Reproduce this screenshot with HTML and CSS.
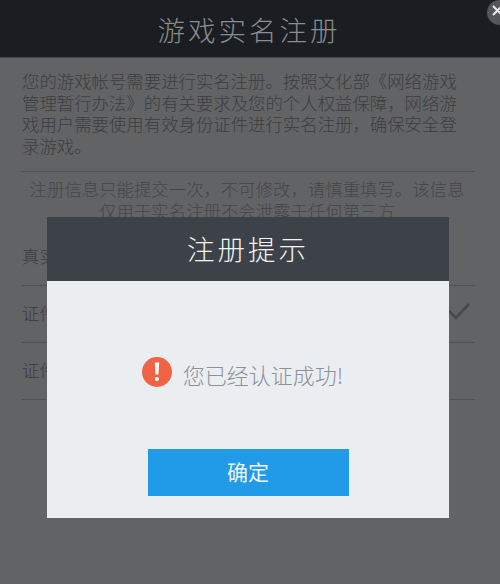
FILE: index.html
```html
<!DOCTYPE html>
<html lang="zh-CN">
<head>
<meta charset="utf-8">
<title>游戏实名注册</title>
<link rel="stylesheet" href="styles.css">
</head>
<body>
<div class="page">
  <header class="topbar">
    <h1 class="topbar-title">游戏实名注册</h1>
    <span class="close-btn"><svg viewBox="0 0 24 24" width="24" height="24"><path d="M6 6l9 9M15 6l-9 9" fill="none" stroke="#e8e8e8" stroke-width="2"/></svg></span>
  </header>
  <main class="content">
    <p class="intro">您的游戏帐号需要进行实名注册。按照文化部《网络游戏管理暂行办法》的有关要求及您的个人权益保障，网络游戏用户需要使用有效身份证件进行实名注册，确保安全登录游戏。</p>
    <p class="notice">注册信息只能提交一次，不可修改，请慎重填写。该信息<br>仅用于实名注册不会泄露于任何第三方</p>
    <div class="row">真实姓名</div>
    <div class="row">证件类型
      <svg class="check" viewBox="0 0 24 20" width="24" height="20"><path d="M2 9l7 7L22 2" fill="none" stroke="#47484b" stroke-width="2.6"/></svg>
    </div>
    <div class="row">证件号码</div>
  </main>
  <section class="dialog">
    <h2 class="dialog-title">注册提示</h2>
    <div class="dialog-body">
      <div class="message">
        <svg class="alert" viewBox="0 0 30 30" width="30" height="30"><circle cx="15" cy="15" r="15" fill="#ee6444"/><path d="M12.8 5.5h4.4l-.8 12h-2.8z" fill="#fff"/><circle cx="15" cy="22" r="2" fill="#fff"/></svg>
        <span class="message-text">您已经认证成功!</span>
      </div>
      <button class="confirm">确定</button>
    </div>
  </section>
</div>
</body>
</html>
```
FILE: styles.css
```css
* { box-sizing: border-box; }
html, body { margin: 0; padding: 0; }
body {
  width: 500px;
  height: 584px;
  overflow: hidden;
  font-family: "Noto Sans CJK SC", "Liberation Sans", sans-serif;
  font-weight: 300;
}
.page {
  position: relative;
  width: 500px;
  height: 584px;
  background: #626365;
  overflow: hidden;
}
.topbar {
  height: 58px;
  background: #1a1d21;
  border-bottom: 1px solid #454649;
  display: flex;
  align-items: center;
  justify-content: center;
  padding-right: 2px;
}
.topbar-title {
  margin: 0;
  font-size: 27.5px;
  font-weight: 300;
  letter-spacing: 3px;
  color: #8b8d8f;
  line-height: 48px;
}
.close-btn {
  position: absolute;
  top: 0;
  right: -12px;
  width: 25px;
  height: 25px;
  border-radius: 50%;
  background: #55565a;
}
.close-btn svg { display: block; }
.content { padding: 12px 24px 0 22px; }
.intro {
  margin: 0;
  padding-right: 17px;
  font-size: 17.4px;
  line-height: 21.7px;
  color: #3c3d40;
  height: 101px;
}
.notice {
  margin: 0 1px 0 0;
  padding: 6px 3px 0 0;
  border-top: 1px solid #515255;
  font-size: 17.4px;
  line-height: 22px;
  color: #454649;
  text-align: center;
  height: 58px;
}
.row {
  display: flex;
  align-items: center;
  justify-content: space-between;
  margin-right: 1px;
  height: 57px;
  padding-bottom: 4px;
  font-size: 17.4px;
  color: #3c3d40;
  border-bottom: 1px solid #515255;
}
.check { margin-right: 4px; }
.dialog {
  position: absolute;
  left: 47px;
  top: 217px;
  width: 402px;
  height: 301px;
  display: flex;
  flex-direction: column;
}
.dialog-title {
  margin: 0;
  height: 64px;
  flex: none;
  background: #3d4249;
  color: #f2f3f4;
  font-size: 27.5px;
  font-weight: 300;
  letter-spacing: 3px;
  line-height: 62px;
  text-align: center;
}
.dialog-body {
  flex: 1;
  background: #ebeef1;
  display: flex;
  flex-direction: column;
  align-items: center;
  padding-top: 76px;
}
.message {
  display: flex;
  align-items: center;
  gap: 11px;
  height: 30px;
  margin-right: 11px;
}
.alert { flex: none; }
.message-text {
  font-size: 22px;
  color: #8d9094;
  padding-top: 3px;
}
.confirm {
  margin-top: 62px;
  width: 201px;
  height: 47px;
  border: 0;
  padding: 0 0 3px;
  background: #219ae8;
  color: #eef7fd;
  font-family: inherit;
  font-weight: 400;
  font-size: 21px;
}
```
